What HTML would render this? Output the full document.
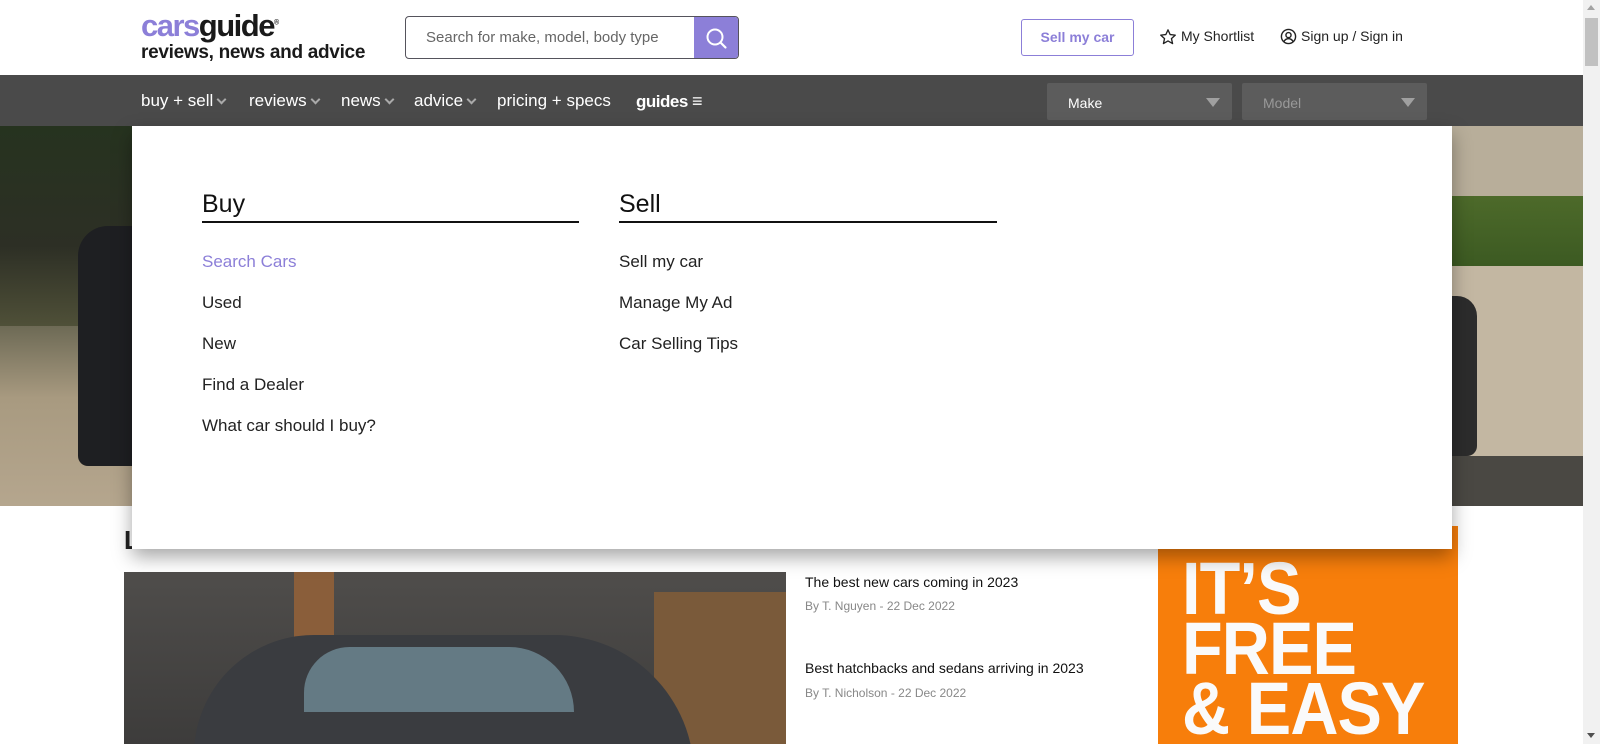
<!DOCTYPE html>
<html><head><meta charset="utf-8">
<style>
*{margin:0;padding:0;box-sizing:border-box}
html,body{width:1600px;height:744px;overflow:hidden;background:#fff;font-family:"Liberation Sans",sans-serif;color:#1a1a1a}
.abs{position:absolute}
.logo1{left:141px;top:8px;font-size:31px;font-weight:bold;letter-spacing:-1.5px}
.logo1 .c{color:#8c7fd8}
.logo2{left:141px;top:42px;font-size:19px;font-weight:bold;letter-spacing:-.3px}
.search{left:405px;top:16px;width:334px;height:43px;border:1px solid #55535c;border-radius:4px;overflow:hidden}
.search span{position:absolute;left:20px;top:12px;font-size:15px;color:#666}
.search .btn{position:absolute;right:0;top:0;width:44px;height:43px;background:#8c7fd8}
.sell{left:1021px;top:19px;width:113px;height:37px;border:1px solid #8c7fd8;border-radius:3px;color:#8c7fd8;font-size:14px;font-weight:bold;text-align:center;line-height:35px}
.hl{font-size:14px;color:#222;top:28px}
.nav{left:0;top:75px;width:1583px;height:51px;background:#4a4a4a}
.nav .it{position:absolute;top:16px;color:#fff;font-size:17px}
.chev{display:inline-block;width:7px;height:7px;border-right:2px solid #aaa;border-bottom:2px solid #aaa;transform:rotate(45deg);margin-left:5px;position:relative;top:-3px}
.dd{position:absolute;top:8px;width:185px;height:37px;background:#5c5c5c;border-radius:2px}
.dd span{position:absolute;left:21px;top:12px;font-size:14px}
.dd i{position:absolute;right:12px;top:15px;border-left:7px solid transparent;border-right:7px solid transparent;border-top:9px solid #a0a0a0}
.hero{left:0;top:126px;width:1583px;height:380px;background:#c9bca5;overflow:hidden}
.panel{left:132px;top:126px;width:1320px;height:423px;background:#fff;box-shadow:0 8px 18px rgba(0,0,0,.35)}
.h{position:absolute;top:64px;font-size:25px;color:#111}
.ul{position:absolute;top:95px;height:2px;background:#111}
.lk{position:absolute;font-size:17px;color:#222}
.scroll{left:1583px;top:0;width:17px;height:744px;background:#f1f1f1}
</style></head><body>
<div class="abs logo1"><span class="c">cars</span>guide<sup style="font-size:7px">®</sup></div>
<div class="abs logo2">reviews, news and advice</div>
<div class="abs search"><span>Search for make, model, body type</span><div class="btn">
<svg width="44" height="43" viewBox="0 0 44 43"><circle cx="21" cy="20" r="7.5" fill="none" stroke="#fff" stroke-width="2"/><path d="M26.5 25.5l5 5" stroke="#fff" stroke-width="2.2" stroke-linecap="round"/></svg></div></div>
<div class="abs sell">Sell my car</div>
<svg class="abs" style="left:1159px;top:28px" width="18" height="18" viewBox="0 0 24 24"><path d="M12 2.5l2.9 6.3 6.8.7-5.1 4.6 1.5 6.7L12 17.3l-6.1 3.5 1.5-6.7L2.3 9.5l6.8-.7z" fill="none" stroke="#222" stroke-width="1.8" stroke-linejoin="round"/></svg>
<div class="abs hl" style="left:1181px">My Shortlist</div>
<svg class="abs" style="left:1280px;top:28px" width="17" height="17" viewBox="0 0 24 24"><circle cx="12" cy="12" r="10" fill="none" stroke="#222" stroke-width="2"/><circle cx="12" cy="10" r="3.6" fill="none" stroke="#222" stroke-width="2"/><path d="M5.5 19c2-3 4-4 6.5-4s4.5 1 6.5 4" fill="none" stroke="#222" stroke-width="2"/></svg>
<div class="abs hl" style="left:1301px">Sign up / Sign in</div>

<div class="abs nav">
<div class="it" style="left:141px">buy + sell<span class="chev"></span></div>
<div class="it" style="left:249px">reviews<span class="chev"></span></div>
<div class="it" style="left:341px">news<span class="chev"></span></div>
<div class="it" style="left:414px">advice<span class="chev"></span></div>
<div class="it" style="left:497px">pricing + specs</div>
<div class="it" style="left:636px;font-weight:bold;letter-spacing:-.5px">guides <span style="font-size:18px">≡</span></div>
<div class="dd" style="left:1047px"><span style="color:#fff">Make</span><i></i></div>
<div class="dd" style="left:1242px"><span style="color:#999">Model</span><i></i></div>
</div>

<div class="abs hero">
<div class="abs" style="left:0;top:0;width:140px;height:200px;background:linear-gradient(180deg,#26331f,#2d2f25 60%,#4f5038)"></div>
<div class="abs" style="left:0;top:200px;width:140px;height:180px;background:linear-gradient(180deg,#6d6a55,#a89a80 40%,#b5a68e)"></div>
<div class="abs" style="left:78px;top:100px;width:62px;height:240px;background:#1e1f22;border-radius:30px 0 0 10px"></div>
<div class="abs" style="left:1452px;top:0;width:131px;height:75px;background:#b8ae9a"></div>
<div class="abs" style="left:1452px;top:70px;width:131px;height:70px;background:linear-gradient(180deg,#4d6a2a,#3c5a22)"></div>
<div class="abs" style="left:1452px;top:140px;width:131px;height:240px;background:#c3b7a2"></div>
<div class="abs" style="left:1452px;top:170px;width:25px;height:160px;background:#2c2c2c;border-radius:0 20px 10px 0"></div>
<div class="abs" style="left:1452px;top:330px;width:131px;height:50px;background:#4a4843"></div>
</div>

<div class="abs" style="left:124px;top:525px;font-size:26px;font-weight:bold;color:#222">L</div>
<div class="abs" style="left:124px;top:572px;width:662px;height:172px;background:linear-gradient(180deg,#4f4d4b,#3d3c3b);overflow:hidden">
<div class="abs" style="left:530px;top:20px;width:132px;height:152px;background:#7a5a3a"></div>
<div class="abs" style="left:170px;top:0;width:40px;height:100px;background:#8a5e3a"></div>
<div class="abs" style="left:70px;top:63px;width:500px;height:140px;background:#3a3c40;border-radius:120px 140px 0 0"></div>
<div class="abs" style="left:180px;top:75px;width:270px;height:65px;background:#6f8a95;border-radius:70px 100px 0 0;opacity:.8"></div>
</div>
<div class="abs" style="left:805px;top:574px;font-size:14px;color:#111">The best new cars coming in 2023</div>
<div class="abs" style="left:805px;top:599px;font-size:12px;color:#888">By T. Nguyen - 22 Dec 2022</div>
<div class="abs" style="left:805px;top:660px;font-size:14px;color:#111">Best hatchbacks and sedans arriving in 2023</div>
<div class="abs" style="left:805px;top:686px;font-size:12px;color:#888">By T. Nicholson - 22 Dec 2022</div>
<div class="abs" style="left:1158px;top:526px;width:300px;height:218px;background:#f77e0b;overflow:hidden">
<div class="abs" style="left:24px;top:33px;font-size:74px;line-height:60px;font-weight:bold;color:#fafafa;transform:scaleX(.9);transform-origin:left top;letter-spacing:-1px">IT’S<br>FREE<br>&amp; EASY</div>
</div>

<div class="abs panel">
<div class="h" style="left:70px">Buy</div><div class="ul" style="left:70px;width:377px"></div>
<div class="h" style="left:487px">Sell</div><div class="ul" style="left:487px;width:378px"></div>
<div class="lk" style="left:70px;top:126px;color:#8c7fd8">Search Cars</div>
<div class="lk" style="left:70px;top:167px">Used</div>
<div class="lk" style="left:70px;top:208px">New</div>
<div class="lk" style="left:70px;top:249px">Find a Dealer</div>
<div class="lk" style="left:70px;top:290px">What car should I buy?</div>
<div class="lk" style="left:487px;top:126px">Sell my car</div>
<div class="lk" style="left:487px;top:167px">Manage My Ad</div>
<div class="lk" style="left:487px;top:208px">Car Selling Tips</div>
</div>

<div class="abs scroll">
<div class="abs" style="left:4px;top:5px;border-left:4px solid transparent;border-right:4px solid transparent;border-bottom:5px solid #a3a3a3"></div>
<div class="abs" style="left:2px;top:18px;width:13px;height:48px;background:#c1c1c1"></div>
<div class="abs" style="left:4px;top:733px;border-left:4px solid transparent;border-right:4px solid transparent;border-top:5px solid #505050"></div>
</div>
</body></html>
